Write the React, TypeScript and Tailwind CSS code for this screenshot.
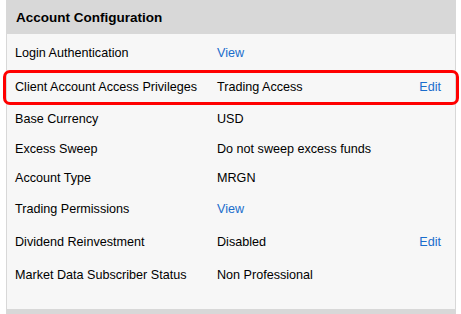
import React from "react";

type Row = { label: string; value?: string; link?: string; action?: string; h: string; highlight?: boolean };

const rows: Row[] = [
  { label: "Login Authentication", link: "View", h: "h-[36px]" },
  { label: "Client Account Access Privileges", value: "Trading Access", action: "Edit", h: "h-[33px]", highlight: true },
  { label: "Base Currency", value: "USD", h: "h-[31px]" },
  { label: "Excess Sweep", value: "Do not sweep excess funds", h: "h-[28px]" },
  { label: "Account Type", value: "MRGN", h: "h-[30px]" },
  { label: "Trading Permissions", link: "View", h: "h-[33px]" },
  { label: "Dividend Reinvestment", value: "Disabled", action: "Edit", h: "h-[33px]" },
  { label: "Market Data Subscriber Status", value: "Non Professional", h: "h-[32px]" },
];

export default function App() {
  return (
    <div className="w-[461px] h-[314px] bg-white overflow-hidden" style={{ fontFamily: '"Liberation Sans", Arial, sans-serif' }}>
      <div className="ml-[6px] w-[450px] bg-[#d8d8d8] px-[1px] pb-[6px]">
        <div className="h-[34px] flex items-center pl-[9px] pt-[2px] text-[13.5px] font-bold text-black">
          Account Configuration
        </div>
        <div className="bg-[#f7f7f7] pt-[1px] pb-[18px]">
          {rows.map((r) => (
            <div key={r.label} className={`relative flex items-center ${r.h} text-[12.6px] text-black`}>
              <div className="w-[210px] shrink-0 pl-[8px]">{r.label}</div>
              <div className="flex-1">
                {r.link ? <span className="text-[#1a6dcc]">{r.link}</span> : r.value}
              </div>
              {r.action && <div className="pr-[14px] text-[#1a6dcc]">{r.action}</div>}
              {r.highlight && (
                <span className="absolute left-[-4px] right-[-4px] top-[-1px] bottom-[-1px] border-[3px] border-[#ff0000] rounded-[7px] pointer-events-none" />
              )}
            </div>
          ))}
        </div>
      </div>
    </div>
  );
}
